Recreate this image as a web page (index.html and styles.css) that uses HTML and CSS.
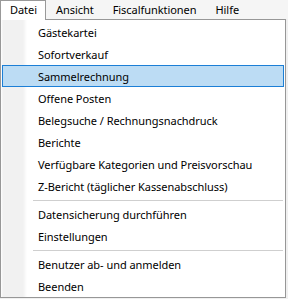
FILE: index.html
```html
<!DOCTYPE html>
<html lang="de">
<head>
  <meta charset="UTF-8" />
  <title>Datei Menü</title>
  <link rel="stylesheet" href="styles.css">
</head>
<body>
  <!-- Menu bar -->
  <div class="menubar">
    <span class="menubar-item open">Datei</span>
    <span class="menubar-item">Ansicht</span>
    <span class="menubar-item">Fiscalfunktionen</span>
    <span class="menubar-item">Hilfe</span>
  </div>

  <!-- Dropdown -->
  <div class="dropdown">
    <div class="item">Gästekartei</div>
    <div class="item">Sofortverkauf</div>
    <div class="item active">Sammelrechnung</div>
    <div class="item">Offene Posten</div>
    <div class="item">Belegsuche / Rechnungsnachdruck</div>
    <div class="item">Berichte</div>
    <div class="item">Verfügbare Kategorien und Preisvorschau</div>
    <div class="item">Z-Bericht (täglicher Kassenabschluss)</div>
    <div class="separator"></div>
    <div class="item">Datensicherung durchführen</div>
    <div class="item">Einstellungen</div>
    <div class="separator"></div>
    <div class="item">Benutzer ab- und anmelden</div>
    <div class="item">Beenden</div>
  </div>
</body>
</html>
```

FILE: styles.css
```css
body {
  margin: 0;
  font-family: "Noto Sans", "Open Sans", sans-serif;
  font-size: 11px;
  letter-spacing: -0.05px;
  color: #000;
  background: #f0f0f0;
  width: 288px;
  height: 299px;
  overflow: hidden;
}

/* Menu bar */
.menubar {
  display: flex;
  height: 19px;
  background: #f5f5f5;
}

.menubar-item {
  padding: 0 9px 0 10px;
  line-height: 19px;
}

.menubar-item.open {
  width: 26px;
  padding: 0 9px;
  background: #fff;
  border: 1px solid #999;
  border-bottom: none;
  height: 19px;
  line-height: 18px;
  box-sizing: content-box;
  position: relative;
  z-index: 2;
}

/* Dropdown menu */
.dropdown {
  width: 284px;
  border: 1px solid #979797;
  padding: 1px 0 0;
  background: linear-gradient(to right, #fff 0, #f1f1f1 2px, #f1f1f1 22px, #fff 26px);
  box-sizing: content-box;
}

.item {
  height: 22px;
  line-height: 21px;
  padding-left: 35px;
  margin: 0 1px;
  border: 1px solid transparent;
  box-sizing: border-box;
  white-space: nowrap;
}

.item.active {
  background: #bcdcf4;
  border-color: #1c7fd6;
}

.separator {
  height: 6px;
  display: flex;
  align-items: center;
  padding-left: 32px;
  padding-right: 2px;
}

.separator::after {
  content: "";
  flex: 1;
  height: 1px;
  background: #cfcfcf;
}
```
